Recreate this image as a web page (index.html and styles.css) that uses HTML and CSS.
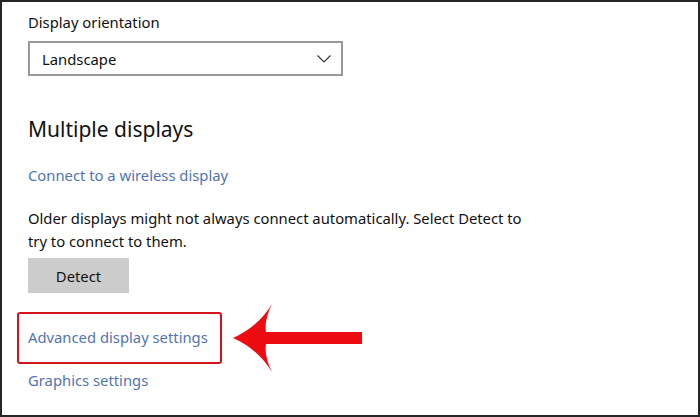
FILE: index.html
```html
<!DOCTYPE html>
<html>
<head>
<meta charset="utf-8">
<link rel="stylesheet" href="styles.css">
</head>
<body>
<div class="frame">
  <div class="label">Display orientation</div>
  <div class="select">
    <span>Landscape</span>
    <svg class="chev" width="14" height="8" viewBox="0 0 14 8"><path d="M0.5 0.5 L7 7 L13.5 0.5" fill="none" stroke="#333" stroke-width="1.1"/></svg>
  </div>
  <h2 class="heading">Multiple displays</h2>
  <a class="link first">Connect to a wireless display</a>
  <p class="para">Older displays might not always connect automatically. Select Detect to try to connect to them.</p>
  <button class="btn">Detect</button>
  <a class="link adv">Advanced display settings</a>
  <a class="link gfx">Graphics settings</a>
  <svg class="arrow" width="140" height="80" viewBox="225 300 140 80">
    <path d="M233 338 Q258 327 272 304 Q264 320 266 332 L362 332 L362 344 L266 344 Q264 356 272 372 Q258 349 233 338 Z" fill="#ec0c12"/>
  </svg>
</div>
</body>
</html>
```
FILE: styles.css
```css
html, body {
  margin: 0;
  padding: 0;
  background: #fff;
}
.frame {
  position: relative;
  box-sizing: border-box;
  width: 700px;
  height: 417px;
  border: 2px solid #262626;
  padding: 10px 0 0 26px;
  font-family: "Noto Sans", "Open Sans", sans-serif;
  color: #111;
  display: flex;
  flex-direction: column;
  align-items: flex-start;
  overflow: hidden;
}
.label {
  font-size: 14.8px;
  line-height: 20px;
}
.select {
  margin-top: 9px;
  box-sizing: border-box;
  width: 315px;
  height: 35px;
  border: 2px solid #999;
  display: flex;
  align-items: center;
  justify-content: space-between;
  padding: 0 10px 0 12px;
  font-size: 14.8px;
}
.chev {
  display: block;
}
.heading {
  margin: 38px 0 0 0;
  font-size: 21px;
  line-height: 30px;
  font-weight: 400;
}
.link {
  display: block;
  font-size: 14.8px;
  line-height: 20px;
  color: #5275ad;
}
.first {
  margin-top: 21px;
}
.para {
  margin: 22px 0 0 0;
  font-size: 14.8px;
  line-height: 23px;
  width: 510px;
}
.btn {
  margin-top: 5px;
  width: 101px;
  height: 35px;
  border: none;
  background: #cccccc;
  font-family: inherit;
  font-size: 14.8px;
  color: #111;
  padding: 0;
}
.adv {
  position: relative;
  margin-top: 34px;
}
.adv::before {
  content: "";
  position: absolute;
  left: -11px;
  top: -15px;
  width: 201px;
  height: 48px;
  border: 2px solid #d3141c;
  border-radius: 3px;
}
.gfx {
  margin-top: 23px;
}
.arrow {
  position: absolute;
  left: 223px;
  top: 298px;
}
```
